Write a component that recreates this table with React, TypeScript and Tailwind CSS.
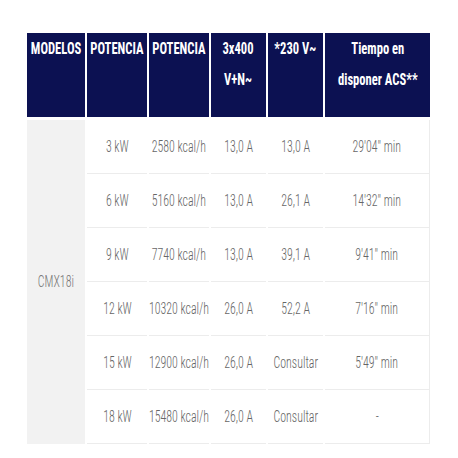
const rows = [
  ["3 kW", "2580 kcal/h", "13,0 A", "13,0 A", "29'04\" min"],
  ["6 kW", "5160 kcal/h", "13,0 A", "26,1 A", "14'32\" min"],
  ["9 kW", "7740 kcal/h", "13,0 A", "39,1 A", "9'41\" min"],
  ["12 kW", "10320 kcal/h", "26,0 A", "52,2 A", "7'16\" min"],
  ["15 kW", "12900 kcal/h", "26,0 A", "Consultar", "5'49\" min"],
  ["18 kW", "15480 kcal/h", "26,0 A", "Consultar", "-"],
];

function Sq({ children }: { children: React.ReactNode }) {
  return (
    <div className="flex justify-center">
      <span className="shrink-0 scale-x-[0.7] whitespace-nowrap">{children}</span>
    </div>
  );
}

function Hq({ children }: { children: React.ReactNode }) {
  return (
    <div className="flex justify-center">
      <span className="shrink-0 scale-x-[0.74] whitespace-nowrap text-center">{children}</span>
    </div>
  );
}

export default function App() {
  const th = "bg-[#0c1152] text-white font-bold text-[17px] leading-[31px] align-top text-center p-0 border-b-[3px] border-white";
  const td = "h-[54px] p-0 text-center align-middle text-[17px] text-[#666] font-light border-b border-[#ececec]";
  return (
    <div className="w-[458px] h-[458px] bg-white pt-[33px] pl-[25px] font-['Roboto_Condensed',_'Liberation_Sans',_sans-serif]">
      <table className="table-fixed border-separate border-spacing-x-[2px] border-spacing-y-0 w-[407px]">
        <colgroup>
          <col className="w-[58px]" />
          <col className="w-[60px]" />
          <col className="w-[60px]" />
          <col className="w-[55px]" />
          <col className="w-[55px]" />
          <col className="w-[105px]" />
        </colgroup>
        <thead>
          <tr className="h-[87px]">
            <th className={th}><Hq>MODELOS</Hq></th>
            <th className={th}><Hq>POTENCIA</Hq></th>
            <th className={th}><Hq>POTENCIA</Hq></th>
            <th className={th}><Hq>3x400<br />V+N~</Hq></th>
            <th className={th}><Hq>*230 V~</Hq></th>
            <th className={th}><Hq>Tiempo en<br />disponer ACS**</Hq></th>
          </tr>
        </thead>
        <tbody>
          {rows.map((r, i) => (
            <tr key={i}>
              {i === 0 && (
                <td rowSpan={6} className="p-0 bg-[#f2f2f2] text-center align-middle text-[17px] text-[#777] font-light">
                  <Sq>CMX18i</Sq>
                </td>
              )}
              {r.map((c, j) => (
                <td key={j} className={j === 4 ? td + " border-r" : td}>
                  <Sq>{c}</Sq>
                </td>
              ))}
            </tr>
          ))}
        </tbody>
      </table>
    </div>
  );
}
